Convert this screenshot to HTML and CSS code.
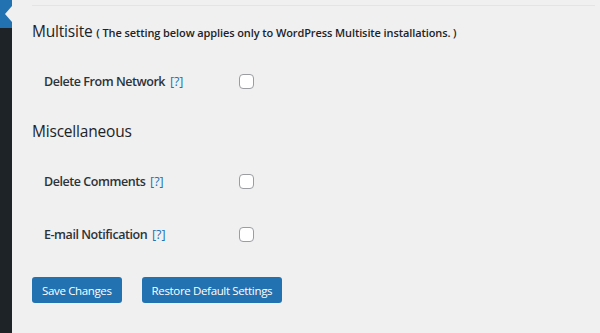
FILE: index.html
```html
<!DOCTYPE html>
<html>
<head>
<meta charset="utf-8">
<link rel="stylesheet" href="styles.css">
</head>
<body>
<div class="sidebar">
  <div class="sidebar-active"><span class="notch"></span></div>
</div>
<main class="content">
  <div class="sep"></div>
  <h2 class="section-title">Multisite <span class="note">( The setting below applies only to WordPress Multisite installations. )</span></h2>
  <div class="row row-first">
    <label class="label">Delete From Network <a class="help">[?]</a></label>
    <span class="checkbox"></span>
  </div>
  <h2 class="section-title section-misc">Miscellaneous</h2>
  <div class="row row-first">
    <label class="label">Delete Comments <a class="help">[?]</a></label>
    <span class="checkbox"></span>
  </div>
  <div class="row row-next">
    <label class="label">E-mail Notification <a class="help">[?]</a></label>
    <span class="checkbox"></span>
  </div>
  <div class="actions">
    <button class="btn">Save Changes</button>
    <button class="btn">Restore Default Settings</button>
  </div>
</main>
</body>
</html>
```
FILE: styles.css
```css
html, body {
  margin: 0;
  padding: 0;
  height: 100%;
}
body {
  background: #f0f0f1;
  display: flex;
  font-family: "Open Sans", "Noto Sans", sans-serif;
  color: #1d2327;
  overflow: hidden;
}
.sidebar {
  width: 12px;
  flex: none;
  background: #1d2327;
  height: 100vh;
}
.sidebar-active {
  height: 28px;
  background: #2271b1;
  position: relative;
}
.notch {
  position: absolute;
  right: 0;
  top: 6px;
  width: 0;
  height: 0;
  border-top: 8px solid transparent;
  border-bottom: 8px solid transparent;
  border-right: 7px solid #f0f0f1;
}
.content {
  flex: 1;
  padding: 0 5px 0 20px;
}
.sep {
  margin-top: 5px;
  height: 1px;
  background: #e4e4e6;
}
.section-title {
  margin: 15px 0 0;
  height: 20px;
  line-height: 20px;
  font-size: 15.5px;
  font-weight: 500;
  letter-spacing: -0.2px;
  color: #1d2327;
}
.section-misc {
  margin-top: 20px;
}
.note {
  font-size: 11px;
  font-weight: 600;
  letter-spacing: -0.1px;
}
.row {
  display: flex;
  align-items: center;
  height: 40px;
  padding-left: 12px;
}
.row-first { margin-top: 20px; }
.row-next { margin-top: 13px; }
.label {
  width: 195px;
  font-size: 12.5px;
  font-weight: 600;
  letter-spacing: -0.45px;
  color: #2c3338;
}
.help {
  color: #2271b1;
  font-weight: 400;
  margin-left: 2px;
  letter-spacing: 0;
}
.checkbox {
  width: 13px;
  height: 13px;
  border: 1px solid #9a9da1;
  border-radius: 4px;
  background: #fff;
  box-sizing: content-box;
}
.actions {
  margin-top: 23px;
  display: flex;
  gap: 20px;
}
.btn {
  height: 26px;
  padding: 0 10px;
  border: 0;
  border-radius: 3px;
  background: #2271b1;
  color: #fff;
  font-family: "Open Sans", "Noto Sans", sans-serif;
  font-size: 11.5px;
  letter-spacing: -0.35px;
  font-weight: 400;
  cursor: pointer;
}
```
